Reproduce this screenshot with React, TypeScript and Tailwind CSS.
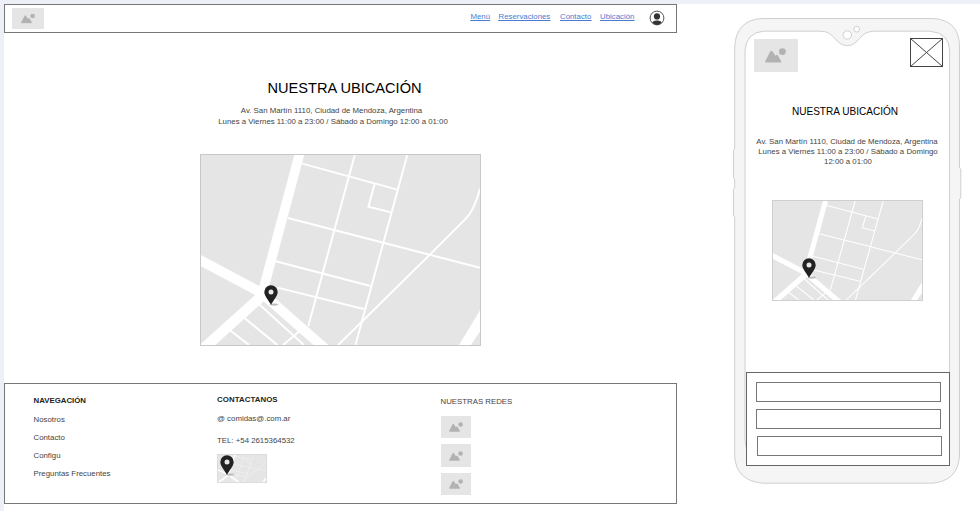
import React from "react";

const small = "text-[7.84px] leading-[10px] text-[#444] whitespace-nowrap";

function Placeholder({ className, iconClass }: { className: string; iconClass: string }) {
  return (
    <div className={`flex items-center justify-center bg-[#e5e5e5] ${className}`}>
      <svg viewBox="0 0 21 15" className={iconClass} fill="#b2b2b2">
        <circle cx="17.4" cy="3.6" r="3.4" />
        <path d="M1.2 14.6C.2 14.6 0 13.7.4 13L5.2 3.6Q6.4 1.7 7.6 3.6l2.8 4.2 .7-.6q1.1-.8 1.8.3l3.3 5.8c.4.8 0 1.3-.8 1.3Z" />
      </svg>
    </div>
  );
}

function Pin({ className }: { className: string }) {
  return (
    <svg viewBox="0 0 18 21" className={`absolute h-[21px] w-[18px] ${className}`}>
      <ellipse cx="10" cy="19.6" rx="4.2" ry="1.1" fill="#bdbdbd" />
      <path
        d="M7 0.2A6.7 6.7 0 0 0 .3 6.9C.3 11.2 5 15.5 7 19.7 9 15.5 13.7 11.2 13.7 6.9A6.7 6.7 0 0 0 7 .2Z"
        fill="#222"
      />
      <circle cx="7" cy="6.9" r="2.5" fill="#e8e8e8" />
    </svg>
  );
}

function StreetMap({ className, pin }: { className: string; pin: string }) {
  return (
    <div className={`relative ${className}`}>
      <svg viewBox="0 0 280 192" preserveAspectRatio="none" className="block h-full w-full bg-[#e5e5e5]">
        <g fill="none" stroke="#fff" strokeWidth="10">
          <path d="M99.4 -3L62 138" strokeWidth="9.6" />
          <path d="M-4 104.5L64 141" />
          <path d="M66 138L1 197" strokeWidth="10.5" />
          <path d="M58 137L126 197" />
        </g>
        <path d="M259 192L280 157V178L271 192Z" fill="#fff" />
        <g fill="none" stroke="#fff" strokeWidth="2">
          <path d="M101.7 8.7L197 35" />
          <path d="M87.3 63.7L280 114" />
          <path d="M75 107.3L170 132.3" />
          <path d="M76.7 134L163.3 155.7" />
          <path d="M154.3 0L107.7 172.7" />
          <path d="M207 0L155 192" />
          <path d="M174.3 28.7L168 52.3L190 57.7" />
          <path d="M137.7 192L228.3 102L266 64Q274 56 280 34" />
          <path d="M56.7 149.3L103.3 192" />
          <path d="M42.3 163.7L76.7 192" />
          <path d="M27.7 176L48.3 192" />
          <path d="M82.3 192L99.3 177.7" />
        </g>
      </svg>
      <Pin className={pin} />
    </div>
  );
}

function Desktop() {
  return (
    <div className="w-[673px] shrink-0">
      <header className="flex h-[29px] items-start border border-[#777] pl-[7px] pt-[3px]">
        <Placeholder className="h-[21px] w-[32px]" iconClass="h-[10px] w-[14px] translate-y-[-0.5px]" />
        <nav className="ml-[426.5px] mt-[4px] flex text-[7.84px] leading-[10px] text-[#4a7bd0] underline">
          <a className="w-[28px]">Menú</a>
          <a className="w-[61.5px]">Reservaciones</a>
          <a className="w-[40px]">Contacto</a>
          <a className="w-[49px]">Ubicación</a>
        </nav>
        <svg viewBox="0 0 16 16" className="mt-[2px] h-[16px] w-[16px]">
          <circle cx="8" cy="8" r="6.9" fill="#fff" stroke="#555" strokeWidth="1" />
          <circle cx="8" cy="6.4" r="3.1" fill="#333" />
          <path d="M3.2 12.6Q4.6 10.4 8 10.6 11.4 10.4 12.8 12.6 10.8 14.9 8 14.9 5.2 14.9 3.2 12.6Z" fill="#333" />
        </svg>
      </header>

      <main className="flex h-[350px] flex-col items-center pt-[46px]">
        <h1 className="ml-[8px] h-[18px] whitespace-nowrap text-[14.6px] leading-[18px] text-black">NUESTRA UBICACIÓN</h1>
        <div className="mt-[9px] flex flex-col items-center">
          <p className={`${small} mr-[18px] h-[11px]`}>Av. San Martín 1110, Ciudad de Mendoza, Argentina</p>
          <p className={`${small} mr-[15px]`}>Lunes a Viernes 11:00 a 23:00 / Sábado a Domingo 12:00 a 01:00</p>
        </div>
        <StreetMap className="mt-[27px] h-[192px] w-[281px] border border-[#c8c8c8]" pin="left-[63px] top-[130px]" />
      </main>

      <footer className="flex h-[121px] border border-[#777] pl-[28.5px]">
        <div className="w-[183.5px] pt-[12px]">
          <h2 className="text-[7.84px] font-bold leading-[10px] text-[#222]">NAVEGACIÓN</h2>
          <ul className={`${small} mt-[9px] flex flex-col gap-[8px]`}>
            <li>Nosotros</li>
            <li>Contacto</li>
            <li>Configu</li>
            <li>Preguntas Frecuentes</li>
          </ul>
        </div>
        <div className="w-[223.5px] pt-[11px]">
          <h2 className="text-[7.84px] font-bold leading-[10px] tracking-[0.08px] text-[#222]">CONTACTANOS</h2>
          <p className={`${small} mt-[9px]`}>@ comidas@.com.ar</p>
          <p className={`${small} mt-[12px]`}>TEL: +54 2615364532</p>
          <StreetMap className="mt-[8px] h-[29px] w-[50px] border border-[#dcdcdc]" pin="left-[2px] top-0" />
        </div>
        <div className="pt-[13px]">
          <h2 className={small}>NUESTRAS REDES</h2>
          <div className="mt-[9px] flex flex-col gap-[6px]">
            <Placeholder className="h-[22px] w-[30px]" iconClass="h-[10px] w-[14px]" />
            <Placeholder className="h-[23px] w-[30px]" iconClass="h-[10px] w-[14px]" />
            <Placeholder className="h-[22px] w-[30px]" iconClass="h-[10px] w-[14px]" />
          </div>
        </div>
      </footer>
    </div>
  );
}

function PhoneFrame() {
  return (
    <svg viewBox="732 4 230 484" className="absolute left-0 top-0 h-[484px] w-[230px]" stroke="#cfcfcf" strokeWidth="1">
      <path
        d="M762 18.5H933Q959.5 20 959.5 47V168L960.8 169V198L959.5 199V456Q958 481 932 483.2H763Q736 481 734.7 456V217L733.5 216V189L734.7 188V179L733.5 178V150L734.7 149V47Q736 20 762 18.5Z"
        fill="#f5f5f5"
      />
      <path
        d="M763 31.2H821C835 31.2 835 45.6 847.3 45.6S859 31.2 874 31.2H930Q949.6 33 949.6 51V446Q949 464 930 465H764Q747 464 745 440V51Q746 33 763 31.2Z"
        fill="#fff"
      />
      <circle cx="847.3" cy="35" r="4.2" fill="#fff" />
      <circle cx="856.7" cy="29.2" r="2.9" fill="#fff" />
    </svg>
  );
}

function Phone() {
  return (
    <div className="relative ml-[55px] h-[484px] w-[230px] shrink-0">
      <PhoneFrame />
      <div className="relative flex h-full flex-col items-center pt-[34px]">
        <div className="ml-[2px] flex h-[35px] w-[189px] items-start justify-between">
          <Placeholder className="mt-[1px] h-[33px] w-[44px]" iconClass="h-[15px] w-[21px]" />
          <svg viewBox="0 0 33 29" className="h-[29px] w-[33px]" fill="#fff" stroke="#444" strokeWidth="1">
            <rect x="0.5" y="0.5" width="32" height="28" />
            <path d="M.5 .5L32.5 28.5M32.5 .5L.5 28.5" />
          </svg>
        </div>
        <h1 className="mr-[4px] mt-[32px] whitespace-nowrap text-[10.05px] leading-[14px] text-black">NUESTRA UBICACIÓN</h1>
        <p className={`${small} mt-[18px]`}>Av. San Martín 1110, Ciudad de Mendoza, Argentina</p>
        <p className={`${small} ml-[2px]`}>Lunes a Viernes 11:00 a 23:00 / Sábado a Domingo</p>
        <p className={`${small} ml-[2px]`}>12:00 a 01:00</p>
        <StreetMap className="ml-[1px] mt-[33px] h-[101px] w-[151px] border border-[#cfcfcf]" pin="left-[29px] top-[57px]" />
        <div className="ml-[2px] mt-[71px] flex h-[94px] w-[204px] flex-col gap-[7px] border border-[#666] bg-white pl-[9px] pt-[9px]">
          <div className="h-[20px] w-[185px] border border-[#777]" />
          <div className="h-[20px] w-[185px] border border-[#777]" />
          <div className="ml-[1px] h-[20px] w-[185px] border border-[#777]" />
        </div>
      </div>
    </div>
  );
}

export default function App() {
  return (
    <div className="h-[511px] w-[980px] overflow-hidden bg-[#edf0f7] pl-[4px] pt-[4px] font-['Liberation_Sans',Arial,sans-serif]">
      <div className="flex h-[507px] w-[976px] items-start bg-white">
        <Desktop />
        <Phone />
      </div>
    </div>
  );
}
